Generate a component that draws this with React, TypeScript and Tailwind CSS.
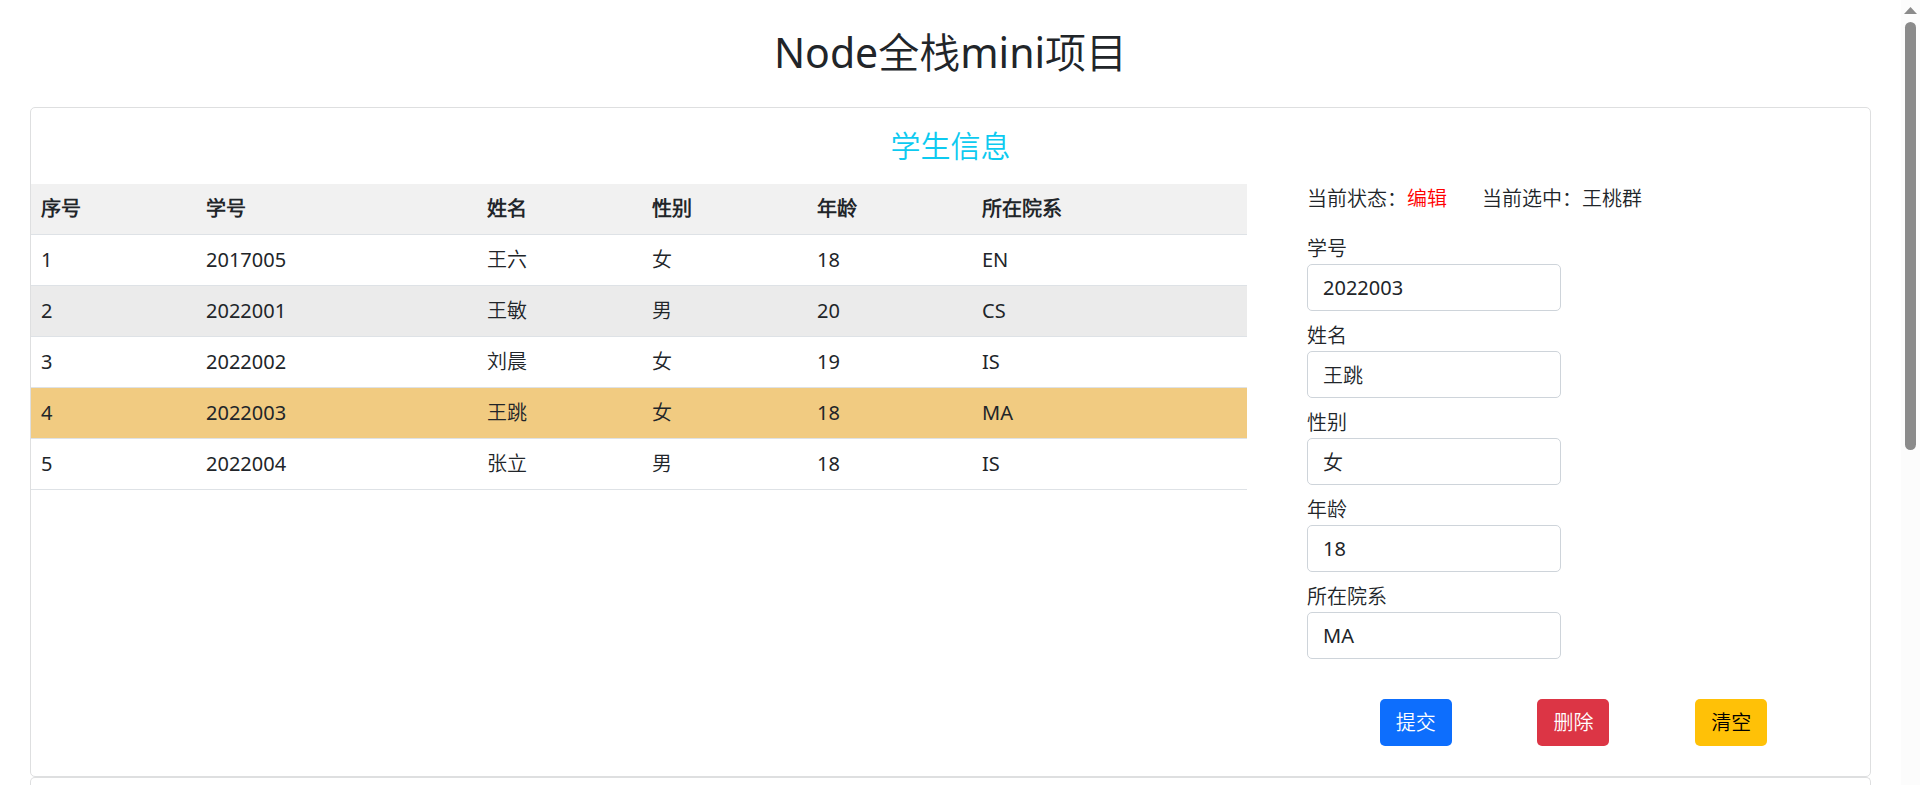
import { useState } from "react";

type Student = {
  id: string;
  name: string;
  gender: string;
  age: string;
  department: string;
};

const students: Student[] = [
  { id: "2017005", name: "王六", gender: "女", age: "18", department: "EN" },
  { id: "2022001", name: "王敏", gender: "男", age: "20", department: "CS" },
  { id: "2022002", name: "刘晨", gender: "女", age: "19", department: "IS" },
  { id: "2022003", name: "王跳", gender: "女", age: "18", department: "MA" },
  { id: "2022004", name: "张立", gender: "男", age: "18", department: "IS" },
];

const columns = [
  { label: "序号", width: "w-[165px]" },
  { label: "学号", width: "w-[281px]" },
  { label: "姓名", width: "w-[165px]" },
  { label: "性别", width: "w-[165px]" },
  { label: "年龄", width: "w-[165px]" },
  { label: "所在院系", width: "w-[275px]" },
];

const fields: { key: keyof Student; label: string }[] = [
  { key: "id", label: "学号" },
  { key: "name", label: "姓名" },
  { key: "gender", label: "性别" },
  { key: "age", label: "年龄" },
  { key: "department", label: "所在院系" },
];

const rowColors = ["", "bg-[#ebebeb]", "", "bg-[#f1cb81]", ""];

function StudentTable() {
  return (
    <table className="w-full table-fixed border-collapse self-start text-left">
      <thead>
        <tr className="border-b border-[#dee2e6] bg-[#f1f1f1]">
          {columns.map((c) => (
            <th key={c.label} className={`${c.width} p-2.5 font-bold`}>
              {c.label}
            </th>
          ))}
        </tr>
      </thead>
      <tbody>
        {students.map((s, i) => (
          <tr key={s.id} className={`border-b border-[#dee2e6] ${rowColors[i]}`}>
            <td className="p-2.5">{i + 1}</td>
            <td className="p-2.5">{s.id}</td>
            <td className="p-2.5">{s.name}</td>
            <td className="p-2.5">{s.gender}</td>
            <td className="p-2.5">{s.age}</td>
            <td className="p-2.5">{s.department}</td>
          </tr>
        ))}
      </tbody>
    </table>
  );
}

function StudentForm() {
  const [values, setValues] = useState<Student>(students[3]);
  const button = "rounded-[5px] px-4 py-2 leading-[31px]";

  return (
    <form onSubmit={(e) => e.preventDefault()}>
      <div className="mb-5 flex gap-[35px]">
        <p>
          当前状态：<span className="text-[#ff0000]">编辑</span>
        </p>
        <p>当前选中：王桃群</p>
      </div>
      <div className="flex flex-col gap-2.5">
        {fields.map((f) => (
          <div key={f.key} className="flex flex-col items-start">
            <label htmlFor={f.key}>{f.label}</label>
            <input
              id={f.key}
              type="text"
              value={values[f.key]}
              onChange={(e) => setValues({ ...values, [f.key]: e.target.value })}
              className="h-[47px] w-[254px] rounded-[5px] border border-[#ced4da] bg-white px-[15px]"
            />
          </div>
        ))}
      </div>
      <div className="mt-10 mr-[60px] ml-[30px] grid grid-cols-3 justify-items-center">
        <button type="submit" className={`${button} bg-[#0d6efd] text-white`}>
          提交
        </button>
        <button type="button" className={`${button} bg-[#dc3545] text-white`}>
          删除
        </button>
        <button type="button" className={`${button} bg-[#ffc107] text-black`}>
          清空
        </button>
      </div>
    </form>
  );
}

function Scrollbar() {
  return (
    <div aria-hidden="true" className="flex w-[19px] shrink-0 flex-col items-center bg-[#fcfcfc] pt-[7px]">
      <svg width="13" height="7" viewBox="0 0 13 7" className="shrink-0 fill-[#8b8b8b]">
        <path d="M6.5 0 13 7H0Z" />
      </svg>
      <div className="mt-2 h-[55%] w-[11px] rounded-full bg-[#8b8b8b]" />
    </div>
  );
}

export default function App() {
  return (
    <div className="flex h-screen bg-white font-['Noto_Sans','Noto_Sans_CJK_SC_DemiLight','Noto_Sans_CJK_SC',sans-serif] text-xl leading-[30px] text-[#212529]">
      <main className="flex min-w-0 flex-1 flex-col overflow-hidden px-[30px]">
        <h1 className="mt-7 mb-[31px] text-center text-[41px] leading-[48px]">Node全栈mini项目</h1>
        <section className="shrink-0 rounded-[5px] border border-[#dedfe0] pb-[30px]">
          <h2 className="py-5 text-center text-[30px] leading-[36px] text-[#0dcaf0]">学生信息</h2>
          <div className="grid grid-cols-[1216fr_563fr] gap-[60px]">
            <StudentTable />
            <StudentForm />
          </div>
        </section>
        <section className="min-h-2 flex-1 rounded-t-[5px] border border-b-0 border-[#dedfe0]" />
      </main>
      <Scrollbar />
    </div>
  );
}
